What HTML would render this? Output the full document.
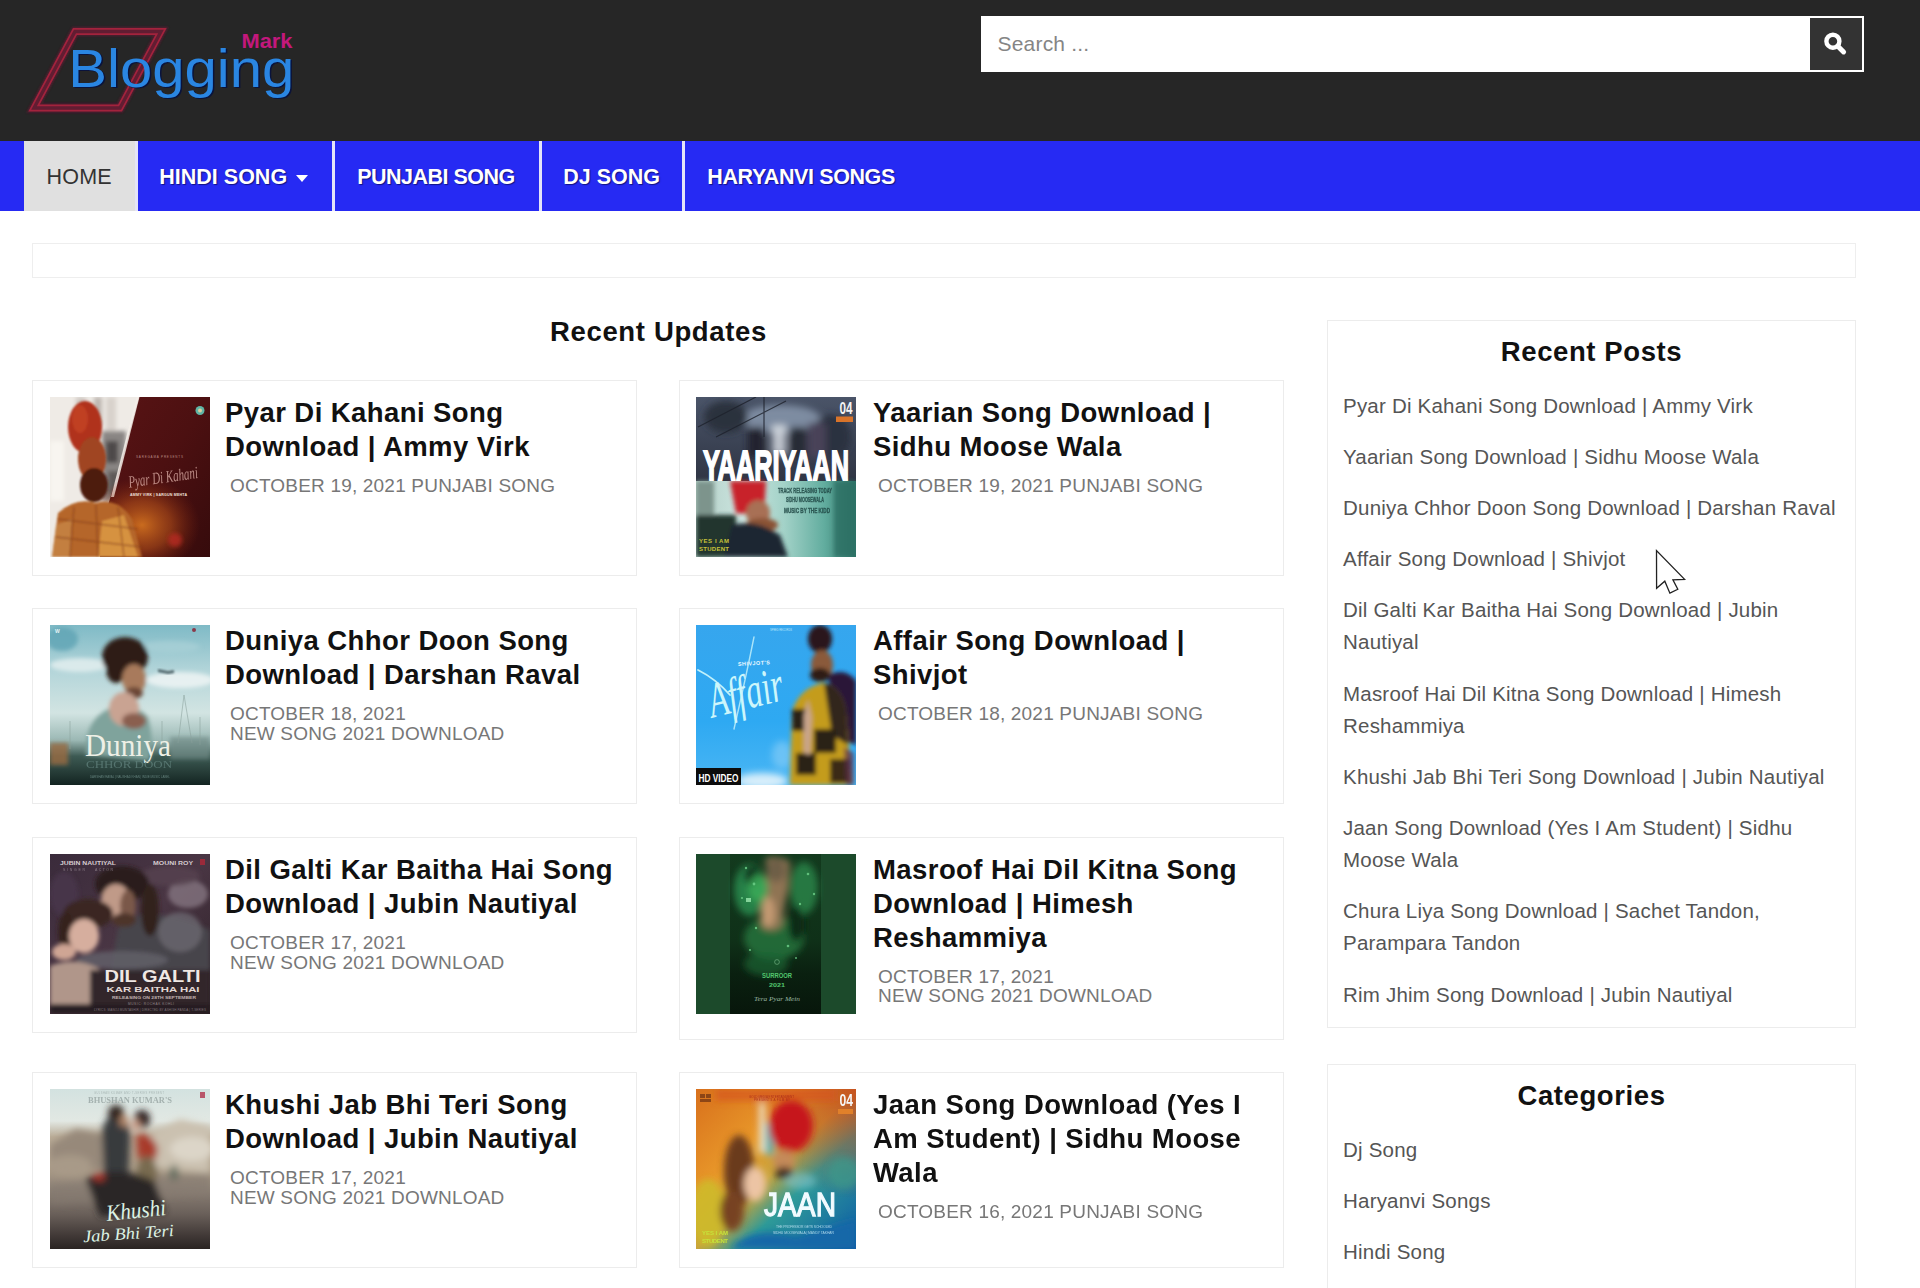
<!DOCTYPE html>
<html lang="en">
<head>
<meta charset="utf-8">
<title>Blogging Mark</title>
<style>
html,body{margin:0;padding:0;}
html{width:1920px;height:1288px;overflow:hidden;}
body{width:1920px;height:1288px;overflow:hidden;background:#fff;position:relative;font-family:"Liberation Sans",Arial,sans-serif;color:#111;}
*{box-sizing:border-box;}
a{color:inherit;text-decoration:none;}
.abs{position:absolute;}
/* header */
#hdr{position:absolute;left:0;top:0;width:1920px;height:142px;background:#262626;}
#logo{position:absolute;left:20px;top:15px;width:290px;height:110px;}
#search{position:absolute;left:981px;top:16px;width:883px;height:56px;background:#fff;}
#search .ph{letter-spacing:.2px;position:absolute;left:16.5px;top:-.5px;line-height:56px;font-size:21px;color:#858585;}
#sbtn{position:absolute;right:0;top:0;width:55px;height:56px;background:#333;border:2px solid #fff;border-left-width:1px;}
/* nav */
#nav{position:absolute;left:0;top:141px;width:1920px;height:70px;background:#262af3;}
#nav .it{position:absolute;top:0;height:70px;line-height:73px;font-weight:bold;font-size:21.5px;color:#fff;white-space:nowrap;text-shadow:1px 1px 1px rgba(0,0,40,.55);}
#nav .home{left:24px;width:111px;background:#e0e0e0;color:#333;font-weight:normal;text-shadow:none;text-align:center;font-size:21.5px;letter-spacing:.2px;padding-right:.5px;}
#nav .dv{position:absolute;top:0;width:3px;height:70px;background:#e4e4f8;}
#nav .car{position:absolute;left:296px;top:34px;width:0;height:0;border-left:6.5px solid transparent;border-right:6.5px solid transparent;border-top:7px solid #fff;}
/* content */
#crumb{position:absolute;left:32px;top:243px;width:1824px;height:35px;border:1px solid #eee;}
h2.sec{position:absolute;margin:0;font-weight:bold;font-size:27.5px;line-height:34px;white-space:nowrap;color:#111;letter-spacing:.65px;}
.card{position:absolute;width:605px;height:196px;border:1px solid #ececec;background:#fff;}
.card .th{position:absolute;left:17px;top:16px;width:160px;height:160px;overflow:hidden;display:block;}
.card .tx{position:absolute;left:193px;top:15px;width:400px;}
.card.r .th{left:16px;}
.card.l .tx{left:192px;}
.card h3{margin:0;font-weight:bold;font-size:27.5px;line-height:33.75px;letter-spacing:.42px;color:#111;white-space:nowrap;}
.card .m{margin:12.5px 0 0 5px;font-size:19px;line-height:19.7px;color:#777;white-space:nowrap;letter-spacing:.19px;}
/* sidebar */
.wid{position:absolute;left:1327px;width:529px;border:1px solid #ececec;background:#fff;}
.wid h2{margin:0;position:absolute;left:0;width:100%;text-align:center;font-weight:bold;font-size:27.5px;line-height:34px;color:#111;letter-spacing:.6px;}
.wid ul{list-style:none;margin:0;padding:0;position:absolute;left:15px;}
.wid li{font-size:20.5px;line-height:32.2px;color:#555;margin:0 0 18.9px 0;letter-spacing:.21px;white-space:nowrap;}
</style>
</head>
<body>
<div id="hdr">
  <svg id="logo" width="290" height="110" viewBox="20 15 290 110">
    <defs><filter id="gl" x="-10%" y="-10%" width="120%" height="120%"><feGaussianBlur stdDeviation="1.1"/></filter></defs>
    <polygon points="75,31.500 161,31.500 120,108 34,108" fill="none" stroke="#5a1c30" stroke-width="9" filter="url(#gl)" opacity=".9"/>
    <polygon points="75,31.500 161,31.500 120,108 34,108" fill="none" stroke="#a3233d" stroke-width="6.800"/>
    <polygon points="75,31.500 161,31.500 120,108 34,108" fill="none" stroke="#611d32" stroke-width="3.400"/>
    <text x="69.8" y="88.2" font-family="Liberation Sans, Arial, sans-serif" font-size="53" fill="#07123f" textLength="226" lengthAdjust="spacingAndGlyphs" opacity=".9">Blogging</text>
    <text x="68.3" y="86.7" font-family="Liberation Sans, Arial, sans-serif" font-size="53" fill="#2a86e2" textLength="226" lengthAdjust="spacingAndGlyphs">Blogging</text>
    <text x="241.5" y="48.3" font-family="Liberation Sans, Arial, sans-serif" font-size="20.5" font-weight="bold" fill="#c2187c" textLength="51" lengthAdjust="spacingAndGlyphs">Mark</text>
  </svg>
  <div id="search"><span class="ph">Search ...</span><div id="sbtn"><svg width="52" height="52" viewBox="0 0 52 52" style="position:absolute;left:0;top:0"><circle cx="22.9" cy="23.2" r="6.5" fill="none" stroke="#fff" stroke-width="4.4"/><path d="M28.6 28.9 L33.6 33.9" stroke="#fff" stroke-width="5" stroke-linecap="round"/></svg></div></div>
</div>
<div id="nav">
  <a class="it home">HOME</a>
  <span class="dv" style="left:135px"></span>
  <a class="it" style="left:159.3px">HINDI SONG</a><span class="car"></span>
  <span class="dv" style="left:332px"></span>
  <a class="it" style="left:357.3px;letter-spacing:-.53px">PUNJABI SONG</a>
  <span class="dv" style="left:539px"></span>
  <a class="it" style="left:563.3px">DJ SONG</a>
  <span class="dv" style="left:682px"></span>
  <a class="it" style="left:707.3px;letter-spacing:-.4px">HARYANVI SONGS</a>
</div>
<div id="crumb"></div>
<h2 class="sec" style="left:550px;top:315px">Recent Updates</h2>

<svg width="0" height="0" style="position:absolute"><defs>
<filter id="b1" x="-20%" y="-20%" width="140%" height="140%"><feGaussianBlur stdDeviation="1"/></filter>
<filter id="b2" x="-20%" y="-20%" width="140%" height="140%"><feGaussianBlur stdDeviation="2"/></filter>
<filter id="b3" x="-30%" y="-30%" width="160%" height="160%"><feGaussianBlur stdDeviation="3.5"/></filter>
<filter id="b6" x="-40%" y="-40%" width="180%" height="180%"><feGaussianBlur stdDeviation="6"/></filter>
<filter id="b10" x="-50%" y="-50%" width="200%" height="200%"><feGaussianBlur stdDeviation="10"/></filter>
</defs></svg>
<!-- CARDS -->
<div class="card l" style="left:32px;top:380px">
  <svg class="th" id="t1" viewBox="0 0 160 160">
    <defs><linearGradient id="g1a" x1="0" y1="0" x2="1" y2="1"><stop offset="0" stop-color="#5a1415"/><stop offset=".5" stop-color="#4c1011"/><stop offset="1" stop-color="#360b0c"/></linearGradient>
    <radialGradient id="g1b" cx=".5" cy=".5" r=".5"><stop offset="0" stop-color="#d0701f" stop-opacity=".95"/><stop offset=".5" stop-color="#b5501a" stop-opacity=".6"/><stop offset="1" stop-color="#8a2a12" stop-opacity="0"/></radialGradient></defs>
    <rect width="160" height="160" fill="#efebe6"/>
    <g filter="url(#b2)"><rect x="26" y="0" width="10" height="40" fill="#cfc8c2"/><rect x="44" y="0" width="8" height="30" fill="#bdb6b0"/><rect x="56" y="0" width="10" height="44" fill="#d8d2cc"/><rect x="52" y="34" width="24" height="70" fill="#8a8684"/><rect x="56" y="44" width="12" height="22" fill="#4e4a48"/><rect x="58" y="74" width="14" height="24" fill="#5e5a58"/><rect x="0" y="44" width="14" height="60" fill="#f8f5f0"/></g>
    <polygon points="89,0 160,0 160,160 50,160 58,108 70,70" fill="url(#g1a)"/>
    <polygon points="86.500,0 89.500,0 64,100 61,100" fill="#f4efe9" opacity=".85"/>
    <ellipse cx="92" cy="128" rx="58" ry="48" fill="url(#g1b)"/>
    <g filter="url(#b1)" >
      <ellipse cx="35" cy="30" rx="17" ry="26" fill="#b0301a"/>
      <ellipse cx="30" cy="22" rx="8" ry="14" fill="#c8462a" opacity=".7"/>
      <ellipse cx="42" cy="62" rx="14" ry="22" fill="#a04420"/>
      <ellipse cx="44" cy="88" rx="14" ry="17" fill="#4e1a10"/>
      <path d="M2 160 L8 116 Q26 100 46 106 Q68 100 82 122 L92 160 Z" fill="#b5662a"/>
      <path d="M48 160 L52 124 L74 118 L88 160 Z" fill="#dc9a44" opacity=".85"/>
      <path d="M2 160 L6 128 L22 122 L20 160 Z" fill="#c98a4a" opacity=".7"/>
    </g>
    <g stroke="#7a3414" stroke-width="1.400" opacity=".5" filter="url(#b1)"><path d="M8 122 L88 132 M6 140 L92 150 M24 110 L20 160 M46 108 L48 160 M68 110 L74 160"/></g>
    <circle cx="125" cy="143" r="7" fill="#b82a20" opacity=".8" filter="url(#b2)"/>
    <circle cx="150" cy="13.500" r="4.500" fill="#5fb5a5"/><circle cx="150" cy="13.500" r="2" fill="#d8d0a0"/>
    <text x="78" y="86" font-family="Liberation Serif, serif" font-style="italic" font-size="17" fill="#d9aaa2" opacity=".8" textLength="70" lengthAdjust="spacingAndGlyphs" transform="rotate(-8 112 80)">Pyar Di Kahani</text>
    <text x="80" y="98.500" font-family="Liberation Sans, sans-serif" font-weight="bold" font-size="3.600" fill="#f0e0dc" textLength="57">AMMY VIRK | SARGUN MEHTA</text>
    <text x="86" y="61" font-family="Liberation Sans, sans-serif" font-size="3" fill="#b98a84" textLength="47">SAREGAMA PRESENTS</text>
  </svg>
  <div class="tx"><h3>Pyar Di Kahani Song<br>Download | Ammy Virk</h3><div class="m">OCTOBER 19, 2021 PUNJABI SONG</div></div>
</div>
<div class="card r" style="left:679px;top:380px">
  <svg class="th" id="t2" viewBox="0 0 160 160">
    <defs><linearGradient id="g2a" x1="0" y1="0" x2="1" y2="0"><stop offset="0" stop-color="#b4cfc8"/><stop offset=".3" stop-color="#cbe5df"/><stop offset=".55" stop-color="#a3d2c8"/><stop offset=".8" stop-color="#62ad9f"/><stop offset="1" stop-color="#2d7468"/></linearGradient>
    <linearGradient id="g2b" x1="0" y1="0" x2="0" y2="1"><stop offset="0" stop-color="#4a5468"/><stop offset="1" stop-color="#2f3544"/></linearGradient></defs>
    <rect width="160" height="84" fill="url(#g2b)"/>
    <g filter="url(#b3)"><ellipse cx="85" cy="22" rx="40" ry="14" fill="#8796ad" opacity=".85"/><ellipse cx="30" cy="20" rx="22" ry="16" fill="#2a303c"/><ellipse cx="135" cy="40" rx="20" ry="22" fill="#2b3040"/><rect x="52" y="30" width="16" height="30" fill="#20242e"/><rect x="76" y="28" width="14" height="30" fill="#dfe4ea" opacity=".8"/><rect x="94" y="30" width="16" height="30" fill="#262a36"/><rect x="112" y="26" width="18" height="34" fill="#4a4258"/></g>
    <g stroke="#1d212b" stroke-width="1.2" opacity=".8"><path d="M68 0 L68 40 M2 30 L60 0 M20 40 L90 4"/></g>
    <rect x="0" y="84" width="160" height="76" fill="url(#g2a)"/>
    <g filter="url(#b2)"><rect x="0" y="84" width="18" height="76" fill="#7d948c"/><rect x="0" y="118" width="40" height="42" fill="#23352f"/>
      <path d="M34 84 L70 84 L68 118 L40 116 Z" fill="#c8202b"/>
      <ellipse cx="62" cy="116" rx="12" ry="13" fill="#a87055"/>
      <ellipse cx="66" cy="128" rx="16" ry="7" fill="#8a5236"/>
      <path d="M28 160 L36 128 Q60 122 84 138 L92 160 Z" fill="#1b2733"/>
      <rect x="138" y="84" width="22" height="76" fill="#2a6e63" opacity=".8"/>
    </g>
    <g fill="#1f4744" stroke="#1f4744" stroke-width=".35" font-family="Liberation Sans, sans-serif" font-weight="bold" font-size="6.400" opacity=".85"><text x="82" y="95.500" textLength="54" lengthAdjust="spacingAndGlyphs">TRACK RELEASING TODAY</text><text x="90" y="105" textLength="38" lengthAdjust="spacingAndGlyphs">SIDHU MOOSEWALA</text><text x="88" y="115.500" textLength="46" lengthAdjust="spacingAndGlyphs">MUSIC BY THE KIDD</text></g>
    <g fill="#c9c23a" font-family="Liberation Sans, sans-serif" font-weight="bold" font-size="6"><text x="3" y="146" textLength="30">YES I AM</text><text x="3" y="154" textLength="30">STUDENT</text></g>
    <rect x="140" y="19.500" width="17" height="5.500" fill="#d9742a"/>
    <text x="143.500" y="17" font-family="Liberation Sans, sans-serif" font-weight="bold" font-size="16.500" fill="#f4f4f4" textLength="13" lengthAdjust="spacingAndGlyphs">04</text>
    <text x="7" y="83" font-family="Liberation Sans, sans-serif" font-weight="bold" font-size="42" fill="#fff" stroke="#fff" stroke-width="1.800" textLength="146" lengthAdjust="spacingAndGlyphs">YAARIYAAN</text>
  </svg>
  <div class="tx"><h3>Yaarian Song Download |<br>Sidhu Moose Wala</h3><div class="m">OCTOBER 19, 2021 PUNJABI SONG</div></div>
</div>
<div class="card l" style="left:32px;top:608px">
  <svg class="th" id="t3" viewBox="0 0 160 160">
    <defs><linearGradient id="g3a" x1="0" y1="0" x2="0" y2="1"><stop offset="0" stop-color="#7fbac6"/><stop offset=".3" stop-color="#b5d6da"/><stop offset=".55" stop-color="#d2e4e2"/><stop offset=".72" stop-color="#9bb8b4"/><stop offset=".82" stop-color="#3d5a53"/><stop offset="1" stop-color="#132421"/></linearGradient></defs>
    <rect width="160" height="160" fill="url(#g3a)"/>
    <g filter="url(#b2)">
      <ellipse cx="30" cy="40" rx="30" ry="7" fill="#e6f0f0" opacity=".8"/><ellipse cx="130" cy="55" rx="34" ry="8" fill="#eef5f4" opacity=".85"/><ellipse cx="120" cy="22" rx="30" ry="6" fill="#a8d0d6" opacity=".8"/>
      <ellipse cx="12" cy="14" rx="16" ry="12" fill="#5fa4b4" opacity=".8"/>
      <path d="M36 130 Q34 96 58 84 Q84 76 98 92 Q104 112 100 136 Z" fill="#7fa39c"/>
      <ellipse cx="75" cy="32" rx="23" ry="20" fill="#2e1d18"/><ellipse cx="66" cy="44" rx="10" ry="14" fill="#2e1d18"/>
      <ellipse cx="84" cy="54" rx="12" ry="15" fill="#a87a5c"/>
      <ellipse cx="84" cy="68" rx="9" ry="6" fill="#6a4535"/>
      <ellipse cx="74" cy="84" rx="15" ry="17" fill="#c9a392"/>
      <ellipse cx="84" cy="96" rx="12" ry="8" fill="#8a5f50"/>
      <rect x="0" y="118" width="18" height="22" fill="#9a6a42" opacity=".8"/>
      <rect x="120" y="112" width="40" height="22" fill="#6f8a86" opacity=".7"/>
    </g>
    <g stroke="#8aa09c" stroke-width=".7" opacity=".8"><path d="M134 70 L128 118 M134 70 L142 118 M112 96 L112 122 M150 92 L150 120 M20 96 L20 124"/></g>
    <path d="M108 44 l10 2 l6 -1 l0 3 l-6 1 l-10 -2z" fill="#556a70" filter="url(#b1)"/>
    <text x="35" y="131" font-family="Liberation Serif, serif" font-size="31" fill="#eef0e6" textLength="86" lengthAdjust="spacingAndGlyphs">Duniya</text>
    <text x="36" y="143" font-family="Liberation Serif, serif" font-size="10" fill="#5f7f7a" textLength="86" lengthAdjust="spacingAndGlyphs" opacity=".8">CHHOR DOON</text>
    <text x="40" y="153" font-family="Liberation Sans, sans-serif" font-size="3" fill="#6f8f8a" textLength="80" opacity=".8">DARSHAN RAVAL | NAUSHAD KHAN | INDIE MUSIC LABEL</text>
    <circle cx="144" cy="5" r="2" fill="#8a3a4a"/><text x="5" y="8" font-family="Liberation Sans, sans-serif" font-weight="bold" font-size="5" fill="#e8f4f4">W</text>
  </svg>
  <div class="tx"><h3>Duniya Chhor Doon Song<br>Download | Darshan Raval</h3><div class="m">OCTOBER 18, 2021<br>NEW SONG 2021 DOWNLOAD</div></div>
</div>
<div class="card r" style="left:679px;top:608px">
  <svg class="th" id="t4" viewBox="0 0 160 160">
    <defs><linearGradient id="g4a" x1="0" y1="0" x2="0" y2="1"><stop offset="0" stop-color="#36a6ee"/><stop offset=".6" stop-color="#2ea9f2"/><stop offset="1" stop-color="#4ab6f4"/></linearGradient></defs>
    <rect width="160" height="160" fill="url(#g4a)"/>
    <g filter="url(#b3)"><ellipse cx="66" cy="156" rx="26" ry="8" fill="#e6f4fc" opacity=".9"/><ellipse cx="86" cy="130" rx="10" ry="14" fill="#7fcaf6" opacity=".7"/></g>
    <g filter="url(#b2)">
      <path d="M132 50 Q150 42 160 56 L160 120 L144 114 Z" fill="#2a1838"/>
      <ellipse cx="124" cy="14" rx="12" ry="14" fill="#2a191c"/>
      <ellipse cx="126" cy="40" rx="11" ry="15" fill="#8a5a3a"/>
      <ellipse cx="124" cy="50" rx="10" ry="7" fill="#2e1c18"/>
      <path d="M94 160 L96 86 Q104 62 128 58 Q146 62 150 86 L156 160 Z" fill="#c49c1e"/>
      <path d="M128 58 Q146 62 150 86 L152 120 L136 110 Z" fill="#33261a"/>
      <rect x="96" y="84" width="18" height="22" fill="#2c2416"/><rect x="118" y="104" width="22" height="24" fill="#2c2416"/><rect x="100" y="128" width="20" height="22" fill="#2c2416"/><rect x="134" y="134" width="20" height="24" fill="#3a2c18"/>
      <path d="M108 90 L112 74 L116 92 L114 130 L108 128 Z" fill="#c9a58c"/>
      <path d="M148 122 L158 128 L158 160 L150 160 Z" fill="#5a2a4a" opacity=".7"/>
    </g>
    <path d="M2 45 Q20 54 34 70" fill="none" stroke="#c8f4fb" stroke-width="1.800" stroke-linecap="round" opacity=".95"/>
    <path d="M58 12 Q50 52 38 104" fill="none" stroke="#c8f4fb" stroke-width="1.400" stroke-linecap="round" opacity=".8"/>
    <text x="12" y="84" font-family="Liberation Serif, serif" font-style="italic" font-size="50" fill="#cdf6fb" textLength="76" lengthAdjust="spacingAndGlyphs" transform="rotate(-14 50 70)">Affair</text>
    <text x="42" y="40" font-family="Liberation Sans, sans-serif" font-weight="bold" font-size="5.500" fill="#eaf8ff" textLength="32" transform="rotate(-3 60 40)">SHIVJOT'S</text>
    <text x="74" y="6" font-family="Liberation Sans, sans-serif" font-size="2.6" fill="#bfe6fb" textLength="22">SPEED RECORDS</text>
    <rect x="0" y="143" width="45" height="17" fill="#0c0c0c"/>
    <text x="2.5" y="156.5" font-family="Liberation Sans, sans-serif" font-weight="bold" font-size="11.5" fill="#fff" textLength="40" lengthAdjust="spacingAndGlyphs">HD VIDEO</text>
  </svg>
  <div class="tx"><h3>Affair Song Download |<br>Shivjot</h3><div class="m">OCTOBER 18, 2021 PUNJABI SONG</div></div>
</div>
<div class="card l" style="left:32px;top:837px">
  <svg class="th" id="t5" viewBox="0 0 160 160">
    <defs><linearGradient id="g5a" x1="0" y1="0" x2="1" y2="1"><stop offset="0" stop-color="#3a2b3b"/><stop offset=".5" stop-color="#4a3644"/><stop offset="1" stop-color="#2c2026"/></linearGradient></defs>
    <rect width="160" height="160" fill="url(#g5a)"/>
    <g filter="url(#b2)">
      <ellipse cx="138" cy="40" rx="20" ry="14" fill="#85747f" opacity=".8"/>
      <ellipse cx="120" cy="22" rx="30" ry="10" fill="#55424f" opacity=".8"/>
      <ellipse cx="14" cy="40" rx="14" ry="22" fill="#46344a"/>
      <path d="M70 66 Q108 52 160 76 L160 118 L60 118 Z" fill="#47454b"/>
      <ellipse cx="130" cy="78" rx="22" ry="20" fill="#6c6a72" opacity=".75"/>
      <ellipse cx="72" cy="106" rx="46" ry="9" fill="#5f5d66" opacity=".9"/>
      <ellipse cx="72" cy="30" rx="27" ry="18" fill="#2b1d1b"/>
      <ellipse cx="100" cy="56" rx="9" ry="26" fill="#33231f"/>
      <ellipse cx="66" cy="48" rx="15" ry="18" fill="#c09a88"/>
      <ellipse cx="78" cy="52" rx="8" ry="16" fill="#7a5848"/>
      <ellipse cx="74" cy="66" rx="12" ry="7" fill="#4e342c"/>
      <ellipse cx="38" cy="60" rx="25" ry="15" fill="#3a2722"/>
      <ellipse cx="16" cy="78" rx="8" ry="20" fill="#35231f"/>
      <ellipse cx="34" cy="82" rx="15" ry="17" fill="#d6ae9e"/>
      <ellipse cx="14" cy="98" rx="12" ry="8" fill="#cfa594"/>
      <path d="M0 160 L0 112 Q24 102 48 114 Q58 126 52 160 Z" fill="#b0968a"/>
      <rect x="40" y="116" width="120" height="44" fill="#33252b"/>
      <rect x="0" y="150" width="160" height="10" fill="#261c21"/>
    </g>
    <g fill="#d6ccd0" font-family="Liberation Sans, sans-serif" font-weight="bold" font-size="5.500"><text x="10" y="10.500" textLength="56" lengthAdjust="spacingAndGlyphs">JUBIN NAUTIYAL</text><text x="103" y="10.500" textLength="40" lengthAdjust="spacingAndGlyphs">MOUNI ROY</text></g>
    <g fill="#9a8c96" font-family="Liberation Sans, sans-serif" font-size="3.500" opacity=".8"><text x="13" y="17" textLength="22">SINGER</text><text x="45" y="17" textLength="18">ACTOR</text></g>
    <rect x="150" y="5" width="5" height="6" fill="#9a2a3a"/>
    <text x="54.500" y="128" font-family="Liberation Sans, sans-serif" font-weight="bold" font-size="16.500" fill="#efe8e4" textLength="96" lengthAdjust="spacingAndGlyphs">DIL GALTI</text>
    <text x="56.500" y="137.800" font-family="Liberation Sans, sans-serif" font-weight="bold" font-size="8" fill="#e2d8d4" textLength="93" lengthAdjust="spacingAndGlyphs">KAR BAITHA HAI</text>
    <text x="62" y="144.500" font-family="Liberation Sans, sans-serif" font-weight="bold" font-size="4" fill="#c0b2b0" textLength="84" lengthAdjust="spacingAndGlyphs">RELEASING ON 28TH SEPTEMBER</text>
    <text x="78" y="150.500" font-family="Liberation Sans, sans-serif" font-size="3.200" fill="#8f8286" textLength="46">MUSIC: ROCHAK KOHLI</text>
    <text x="44" y="156.500" font-family="Liberation Sans, sans-serif" font-size="3" fill="#7f7378" textLength="112">LYRICS: MANOJ MUNTASHIR  |  DIRECTED BY ASHISH PANDA  |  T-SERIES</text>
  </svg>
  <div class="tx"><h3>Dil Galti Kar Baitha Hai Song<br>Download | Jubin Nautiyal</h3><div class="m">OCTOBER 17, 2021<br>NEW SONG 2021 DOWNLOAD</div></div>
</div>
<div class="card r" style="left:679px;top:837px;height:203px">
  <svg class="th" id="t6" viewBox="0 0 160 160">
    <defs><linearGradient id="g6a" x1="0" y1="0" x2="0" y2="1"><stop offset="0" stop-color="#133a1e"/><stop offset=".55" stop-color="#0f3018"/><stop offset=".75" stop-color="#0a2010"/><stop offset="1" stop-color="#07160b"/></linearGradient></defs>
    <rect width="160" height="160" fill="#1c4a2b"/>
    <rect x="34" y="0" width="91" height="160" fill="url(#g6a)"/>
    <g filter="url(#b3)">
      <ellipse cx="54" cy="36" rx="16" ry="26" fill="#2f9a55" opacity=".75"/><ellipse cx="108" cy="34" rx="14" ry="26" fill="#2c9452" opacity=".7"/>
      <ellipse cx="78" cy="84" rx="30" ry="22" fill="#24783f" opacity=".8"/><ellipse cx="70" cy="110" rx="22" ry="12" fill="#1e6434" opacity=".7"/>
      <ellipse cx="56" cy="22" rx="8" ry="10" fill="#0b2412"/>
      <path d="M70 4 Q82 0 94 8 L92 36 Q88 50 86 72 Q78 80 66 74 Q62 56 70 40 Z" fill="#9a7a58" opacity=".92"/>
      <ellipse cx="80" cy="16" rx="10" ry="12" fill="#6e5e46"/>
      <ellipse cx="72" cy="58" rx="7" ry="15" fill="#c49a72"/><ellipse cx="62" cy="34" rx="10" ry="14" fill="#3aae5a" opacity=".8"/>
      <ellipse cx="100" cy="70" rx="8" ry="18" fill="#0d2a15"/>
    </g>
    <g fill="#6fd28a" opacity=".8"><circle cx="50" cy="14" r="1.2"/><circle cx="58" cy="30" r="1.4"/><circle cx="46" cy="44" r="1.1"/><circle cx="112" cy="20" r="1.3"/><circle cx="118" cy="40" r="1.2"/><circle cx="104" cy="50" r="1.2"/><circle cx="60" cy="74" r="1.2"/><circle cx="92" cy="92" r="1.3"/><circle cx="54" cy="96" r="1.1"/><circle cx="100" cy="104" r="1"/><rect x="50" y="44" width="5" height="4" fill="#9be8ae"/></g>
    <circle cx="81" cy="108" r="2.4" fill="none" stroke="#7ab88a" stroke-width=".6"/>
    <text x="66" y="124" font-family="Liberation Sans, sans-serif" font-weight="bold" font-size="7" fill="#52c66e" textLength="30" lengthAdjust="spacingAndGlyphs">SURROOR</text>
    <text x="73" y="133" font-family="Liberation Sans, sans-serif" font-weight="bold" font-size="6" fill="#52c66e" textLength="16" lengthAdjust="spacingAndGlyphs">2021</text>
    <text x="58" y="147" font-family="Liberation Serif, serif" font-style="italic" font-size="6" fill="#9ab8a2" textLength="46" lengthAdjust="spacingAndGlyphs">Tera Pyar Mein</text>
  </svg>
  <div class="tx"><h3>Masroof Hai Dil Kitna Song<br>Download | Himesh<br>Reshammiya</h3><div class="m">OCTOBER 17, 2021<br>NEW SONG 2021 DOWNLOAD</div></div>
</div>
<div class="card l" style="left:32px;top:1072px">
  <svg class="th" id="t7" viewBox="0 0 160 160">
    <defs><linearGradient id="g7a" x1="0" y1="0" x2="0" y2="1"><stop offset="0" stop-color="#d3e2e0"/><stop offset=".2" stop-color="#e2e8e3"/><stop offset=".3" stop-color="#b9ab96"/><stop offset=".5" stop-color="#ab9c88"/><stop offset=".62" stop-color="#8d8176"/><stop offset=".78" stop-color="#6a605a"/><stop offset=".92" stop-color="#403836"/><stop offset="1" stop-color="#2a2422"/></linearGradient></defs>
    <rect width="160" height="160" fill="url(#g7a)"/>
    <g filter="url(#b3)">
      <path d="M0 56 L26 40 L58 46 L60 80 L0 84 Z" fill="#97897a"/>
      <path d="M100 46 L130 30 L160 38 L160 84 L100 78 Z" fill="#cbc1b0"/>
      <ellipse cx="142" cy="60" rx="22" ry="12" fill="#dcd5c8"/>
      <ellipse cx="20" cy="76" rx="22" ry="10" fill="#a89a88"/>
      <path d="M0 96 L160 84 L160 104 L0 116 Z" fill="#857a70" opacity=".6"/>
      <path d="M52 44 Q54 26 68 24 Q80 28 80 50 L78 90 L54 90 Z" fill="#383a3c"/>
      <ellipse cx="66" cy="24" rx="8" ry="8" fill="#2e221e"/>
      <ellipse cx="74" cy="32" rx="5" ry="6" fill="#b08468"/>
      <ellipse cx="92" cy="30" rx="8" ry="9" fill="#2c1e1a"/>
      <ellipse cx="86" cy="36" rx="4.500" ry="6" fill="#c99a84"/>
      <path d="M86 46 Q102 42 108 60 L106 70 L88 70 Z" fill="#a83a2a"/>
      <ellipse cx="97" cy="84" rx="10" ry="17" fill="#786a50"/>
      <path d="M36 90 Q66 74 104 92 L116 124 L50 128 Z" fill="#2a2826"/>
      <ellipse cx="49" cy="88" rx="6" ry="4" fill="#a8342c"/>
      <ellipse cx="124" cy="84" rx="5" ry="8" fill="#5f6a5c" opacity=".8"/>
    </g>
    <text x="38" y="14" font-family="Liberation Serif, serif" font-weight="bold" font-size="8" fill="#8f9c9a" textLength="84" lengthAdjust="spacingAndGlyphs" opacity=".7">BHUSHAN KUMAR'S</text>
    <text x="44" y="5" font-family="Liberation Sans, sans-serif" font-size="2.600" fill="#a0aeac" textLength="70" opacity=".8">GULSHAN KUMAR AND T-SERIES PRESENT</text>
    <rect x="150" y="3" width="5" height="6" fill="#b8566a"/>
    <g font-family="Liberation Serif, serif" font-style="italic" fill="#dcf2e4"><text x="56" y="129" font-size="23" textLength="60" lengthAdjust="spacingAndGlyphs" transform="rotate(-6 86 122)">Khushi</text><text x="33" y="150" font-size="17" textLength="91" lengthAdjust="spacingAndGlyphs" transform="rotate(-4 80 146)">Jab Bhi Teri</text></g>
  </svg>
  <div class="tx"><h3>Khushi Jab Bhi Teri Song<br>Download | Jubin Nautiyal</h3><div class="m">OCTOBER 17, 2021<br>NEW SONG 2021 DOWNLOAD</div></div>
</div>
<div class="card r" style="left:679px;top:1072px">
  <svg class="th" id="t8" viewBox="0 0 160 160">
    <defs><linearGradient id="g8a" x1="0" y1="0" x2="1" y2="1"><stop offset="0" stop-color="#d8701c"/><stop offset=".34" stop-color="#e8982a"/><stop offset=".5" stop-color="#c9a43c"/><stop offset=".64" stop-color="#2e9a98"/><stop offset="1" stop-color="#0e5aa6"/></linearGradient>
    <radialGradient id="g8b" cx="1" cy="0" r="1"><stop offset="0" stop-color="#c6451a" stop-opacity=".85"/><stop offset="1" stop-color="#c6451a" stop-opacity="0"/></radialGradient></defs>
    <rect width="160" height="160" fill="url(#g8a)"/>
    <rect x="50" y="0" width="110" height="110" fill="url(#g8b)"/>
    <g filter="url(#b3)">
      <rect x="20" y="0" width="120" height="12" fill="#d6561a" opacity=".7"/>
      <ellipse cx="12" cy="124" rx="18" ry="34" fill="#cdbc2a" opacity=".85"/>
      <rect x="63" y="14" width="6" height="50" fill="#eef0e4" opacity=".85"/>
      <rect x="69" y="34" width="9" height="32" fill="#52b4c2" opacity=".85"/>
      <ellipse cx="95" cy="37" rx="22" ry="26" fill="#c6151c"/>
      <ellipse cx="88" cy="72" rx="11" ry="11" fill="#c48a5a"/>
      <ellipse cx="88" cy="84" rx="9" ry="6" fill="#3c2a1c"/>
      <ellipse cx="43" cy="82" rx="15" ry="36" fill="#6b3a1e"/>
      <ellipse cx="36" cy="122" rx="12" ry="20" fill="#774224"/>
      <ellipse cx="59" cy="95" rx="11" ry="17" fill="#ecc4a4"/>
      <ellipse cx="148" cy="84" rx="16" ry="16" fill="#3a9a8a" opacity=".7"/>
      <ellipse cx="104" cy="92" rx="16" ry="8" fill="#8ac8d0" opacity=".55"/>
      <path d="M34 160 Q56 136 100 148 L160 130 L160 160 Z" fill="#1768a8"/>
    </g>
    <g fill="#7a3a14" opacity=".8"><rect x="4" y="5" width="5" height="4"/><rect x="10" y="5" width="5" height="4"/><rect x="4" y="10" width="11" height="3"/></g>
    <g font-family="Liberation Sans, sans-serif" font-weight="bold" fill="#c6e23a" font-size="6"><text x="6" y="146" textLength="26">YES I AM</text><text x="6" y="154" textLength="26">STUDENT</text></g>
    <g font-family="Liberation Sans, sans-serif" font-size="3.400" fill="#bfe4f2" opacity=".85"><text x="80" y="139" textLength="56">THE PROFESSOR GETS SCHOOLED</text><text x="77" y="145" textLength="61">SIDHU MOOSEWALA | MANDY TAKHAR</text></g>
    <g font-family="Liberation Sans, sans-serif" font-size="3" fill="#a82a1a" opacity=".85"><text x="53" y="8.500" textLength="45">GOLD MEDIA ENTERTAINMENT</text><text x="58" y="12.400" textLength="36">PRESENTS A FILM BY</text></g>
    <rect x="142" y="20" width="15" height="5" fill="#e0802a"/>
    <text x="143.500" y="16.500" font-family="Liberation Sans, sans-serif" font-weight="bold" font-size="16.500" fill="#f6f6f6" textLength="13.500" lengthAdjust="spacingAndGlyphs">04</text>
    <text x="68" y="126.600" font-family="Liberation Sans, sans-serif" font-size="34" fill="#f2fbff" stroke="#f2fbff" stroke-width="1.300" textLength="72" lengthAdjust="spacingAndGlyphs">JAAN</text>
  </svg>
  <div class="tx"><h3>Jaan Song Download (Yes I<br>Am Student) | Sidhu Moose<br>Wala</h3><div class="m">OCTOBER 16, 2021 PUNJABI SONG</div></div>
</div>

<!-- SIDEBAR -->
<div class="wid" style="top:320px;height:708px">
  <h2 style="top:14px">Recent Posts</h2>
  <ul style="top:68.9px">
    <li>Pyar Di Kahani Song Download | Ammy Virk</li>
    <li>Yaarian Song Download | Sidhu Moose Wala</li>
    <li>Duniya Chhor Doon Song Download | Darshan Raval</li>
    <li>Affair Song Download | Shivjot</li>
    <li>Dil Galti Kar Baitha Hai Song Download | Jubin<br>Nautiyal</li>
    <li>Masroof Hai Dil Kitna Song Download | Himesh<br>Reshammiya</li>
    <li>Khushi Jab Bhi Teri Song Download | Jubin Nautiyal</li>
    <li>Jaan Song Download (Yes I Am Student) | Sidhu<br>Moose Wala</li>
    <li>Chura Liya Song Download | Sachet Tandon,<br>Parampara Tandon</li>
    <li>Rim Jhim Song Download | Jubin Nautiyal</li>
  </ul>
</div>
<div class="wid" style="top:1064px;height:224px;border-bottom:0;overflow:hidden">
  <h2 style="top:14px">Categories</h2>
  <ul style="top:68.9px">
    <li>Dj Song</li>
    <li>Haryanvi Songs</li>
    <li>Hindi Song</li>
    <li>New Song 2021 Download</li>
  </ul>
</div>

<svg style="position:absolute;left:1654px;top:547px" width="36" height="50" viewBox="0 0 36 50"><path d="M2.500 3.500 L2.600 41.300 L10.800 34.200 L15.900 46.200 L23.800 42.300 L18.900 32.800 L30.600 32.300 Z" fill="#fff" stroke="#222" stroke-width="1.300" stroke-linejoin="miter" stroke-miterlimit="3"/></svg>
</body>
</html>
